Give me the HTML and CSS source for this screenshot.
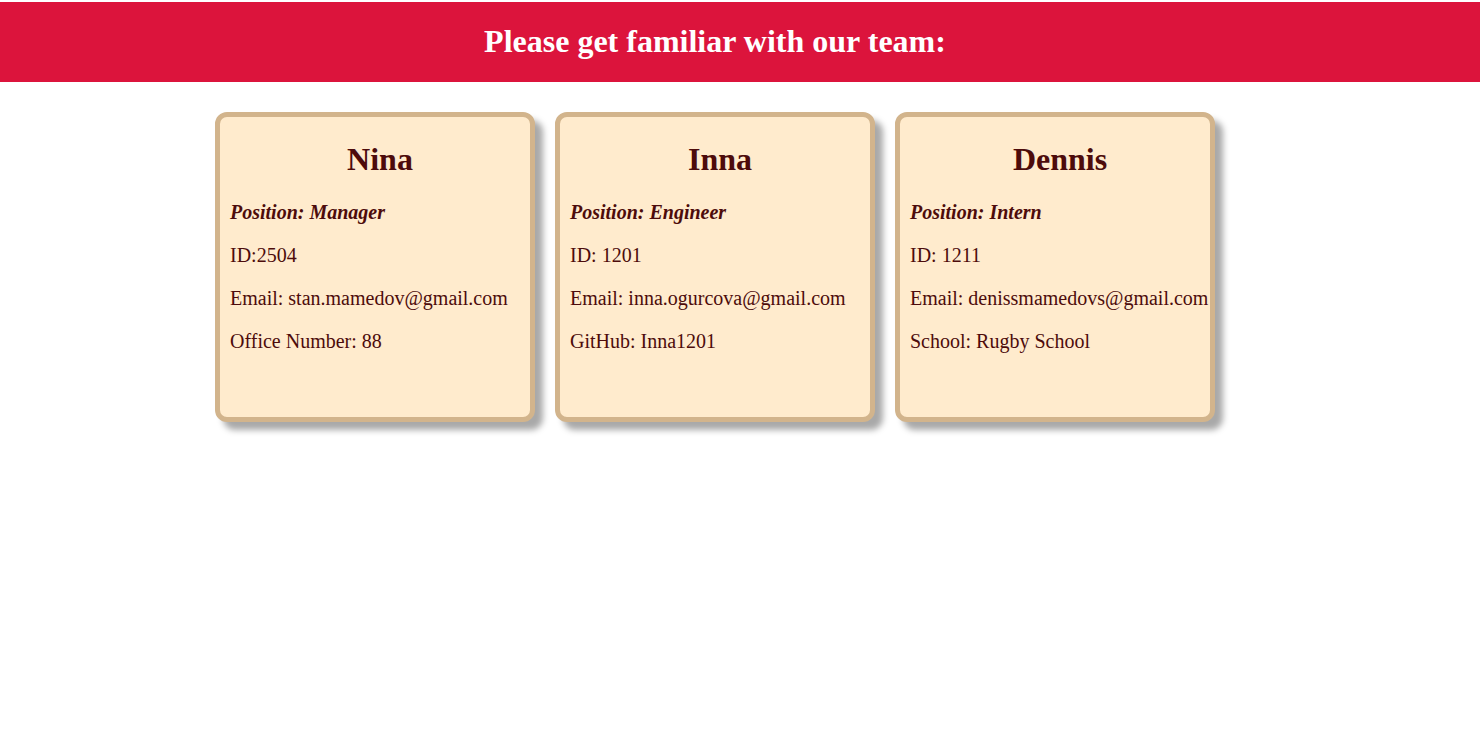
FILE: index.html
```html
<!DOCTYPE html>
<html>
<head>
<meta charset="utf-8">
<title>Team</title>
<link rel="stylesheet" href="styles.css">
</head>
<body>
<header class="banner">
  <h1 class="banner-title">Please get familiar with our team:</h1>
</header>
<main class="team">
  <section class="card">
    <h2 class="card-name">Nina</h2>
    <p class="card-role">Position: Manager</p>
    <p class="card-line">ID:2504</p>
    <p class="card-line">Email: stan.mamedov@gmail.com</p>
    <p class="card-line">Office Number: 88</p>
  </section>
  <section class="card">
    <h2 class="card-name">Inna</h2>
    <p class="card-role">Position: Engineer</p>
    <p class="card-line">ID: 1201</p>
    <p class="card-line">Email: inna.ogurcova@gmail.com</p>
    <p class="card-line">GitHub: Inna1201</p>
  </section>
  <section class="card">
    <h2 class="card-name">Dennis</h2>
    <p class="card-role">Position: Intern</p>
    <p class="card-line">ID: 1211</p>
    <p class="card-line">Email: denissmamedovs@gmail.com</p>
    <p class="card-line">School: Rugby School</p>
  </section>
</main>
</body>
</html>
```
FILE: styles.css
```css
html, body {
  margin: 0;
  padding: 0;
  background: #ffffff;
  font-family: "Liberation Serif", "Times New Roman", serif;
}

body {
  padding-top: 2px;
}

.banner {
  box-sizing: border-box;
  background: #dc143c;
  height: 80px;
  display: flex;
  align-items: center;
  justify-content: center;
  padding: 0 50px 2px 0;
}

.banner-title {
  margin: 0;
  color: #ffffff;
  font-size: 32px;
  font-weight: bold;
  line-height: 1;
}

.team {
  display: flex;
  justify-content: center;
  gap: 20px;
  padding: 30px 50px 40px 0;
}

.card {
  box-sizing: border-box;
  width: 320px;
  height: 310px;
  background: #ffebcd;
  border: 5px solid #d2b48c;
  border-radius: 12px;
  box-shadow: 8px 8px 6px #a9a9a9;
  padding: 24px 0 0 10px;
  color: #4d0b0b;
}

.card-name {
  margin: 0 0 23px;
  text-align: center;
  font-size: 32px;
  font-weight: bold;
  line-height: 1.15;
}

.card-role {
  margin: 0 0 20px;
  font-size: 20px;
  font-weight: bold;
  font-style: italic;
  line-height: 1.15;
}

.card-line {
  margin: 0 0 20px;
  font-size: 20px;
  line-height: 1.15;
  white-space: nowrap;
}
```
